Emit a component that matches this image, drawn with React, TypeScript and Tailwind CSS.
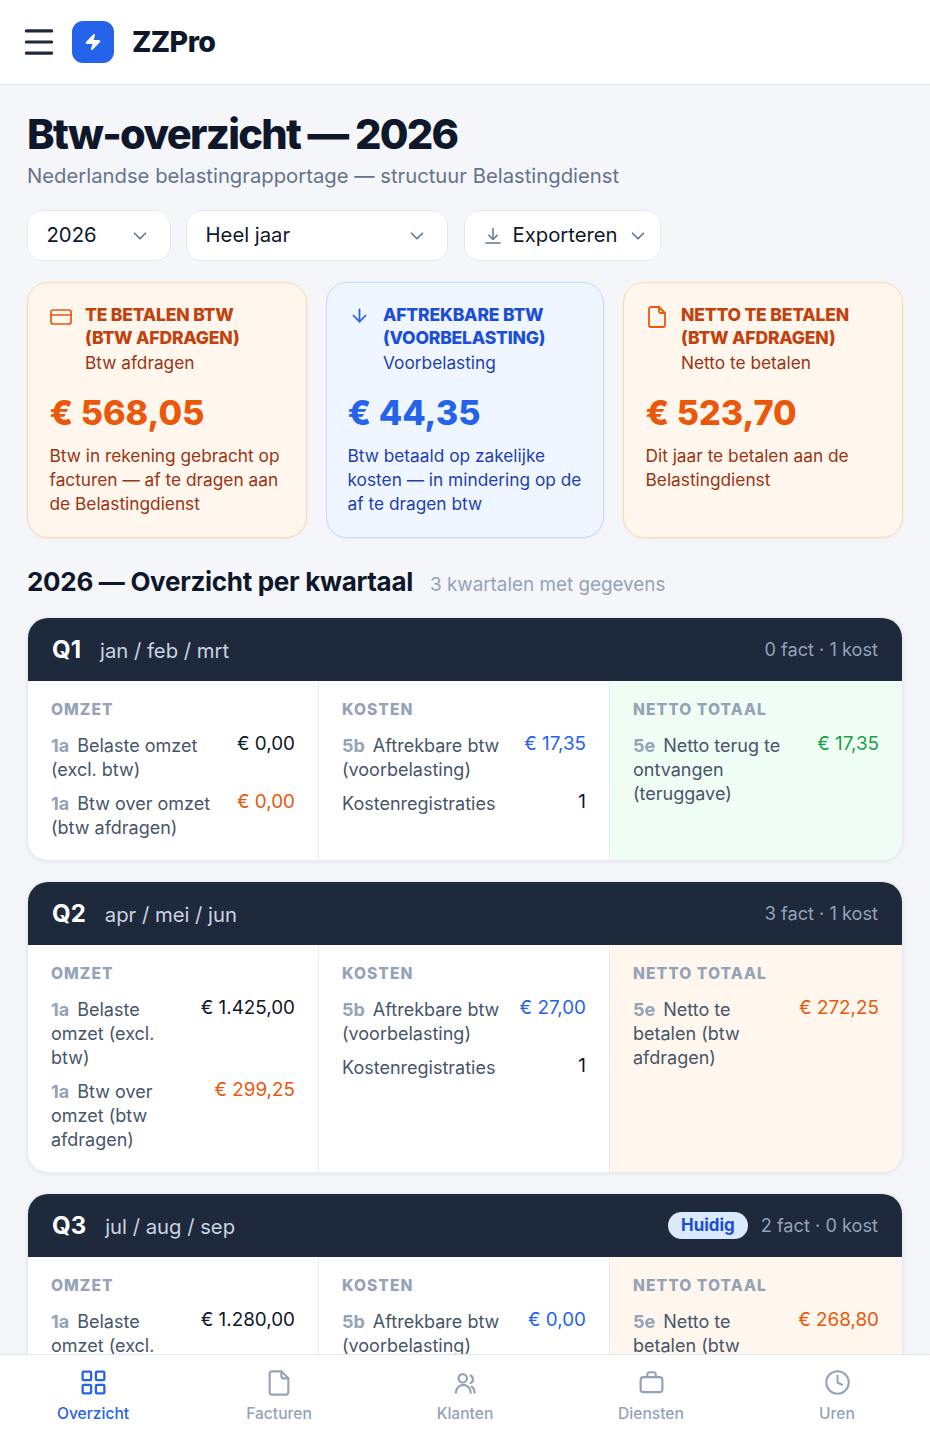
import { ArrowDown, ChevronDown, Clock, LayoutGrid, Menu, Zap } from 'lucide-react'
import type { ReactNode } from 'react'

const font = "font-['Inter',sans-serif]"

function CardIcon({ className }: { className?: string }) {
  return (
    <svg viewBox="0 0 24 24" fill="none" stroke="currentColor" strokeWidth="1.7" strokeLinecap="round" strokeLinejoin="round" className={className}>
      <rect x="2" y="5" width="20" height="14" rx="2" />
      <path d="M2 10h20" />
    </svg>
  )
}

function FileIcon({ className }: { className?: string }) {
  return (
    <svg viewBox="0 0 24 24" fill="none" stroke="currentColor" strokeWidth="1.8" strokeLinecap="round" strokeLinejoin="round" className={className}>
      <path d="M14 2H6a2 2 0 0 0-2 2v16a2 2 0 0 0 2 2h12a2 2 0 0 0 2-2V8z" />
      <path d="M14 2v4a2 2 0 0 0 2 2h4" />
    </svg>
  )
}

function BagIcon({ className }: { className?: string }) {
  return (
    <svg viewBox="0 0 24 24" fill="none" stroke="currentColor" strokeWidth="1.8" strokeLinecap="round" strokeLinejoin="round" className={className}>
      <rect x="3" y="7.5" width="18" height="12.5" rx="2.5" />
      <path d="M8.5 7.5v-2a2 2 0 0 1 2-2h3a2 2 0 0 1 2 2v2" />
    </svg>
  )
}

function PeopleIcon({ className }: { className?: string }) {
  return (
    <svg viewBox="0 0 24 24" fill="none" stroke="currentColor" strokeWidth="1.8" strokeLinecap="round" strokeLinejoin="round" className={className}>
      <circle cx="9.7" cy="8.5" r="3.5" />
      <path d="M4 20.5c0-3.5 2.8-6.5 6.2-6.5s6.2 3 6.2 6.5" />
      <path d="M16.2 6.2a3.5 3.5 0 0 1 0 6.3" />
      <path d="M19.5 20.5c0-2.2-.9-3.9-2.4-5" />
    </svg>
  )
}

function ExportIcon({ className }: { className?: string }) {
  return (
    <svg viewBox="0 0 24 24" fill="none" stroke="currentColor" strokeWidth="1.8" strokeLinecap="round" strokeLinejoin="round" className={className}>
      <path d="M12 3v13" />
      <path d="M7 11l5 5 5-5" />
      <path d="M3.5 20.5h17" />
    </svg>
  )
}

function SummaryCard(props: {
  tone: 'orange' | 'blue'
  icon: ReactNode
  title: ReactNode
  sub: string
  amount: string
  text: string
}) {
  const blue = props.tone === 'blue'
  return (
    <div className={`rounded-[21px] border-[1.5px] pt-[20px] h-[256px] shadow-[0_1px_3px_rgba(15,23,42,0.05)] ${blue ? 'pl-[20.5px] pr-[19px] bg-[#eff6ff] border-[#bfdbfe]' : 'px-[21.5px] bg-[#fff7ed] border-[#fed7aa]'}`}>
      <div className="flex gap-[12.5px]">
        <div className="w-[23px] shrink-0 pt-[2px] flex justify-center">{props.icon}</div>
        <div>
          <div className={`text-[17.55px] leading-[23px] font-extrabold tracking-[-0.2px] ${blue ? 'text-[#1d4ed8]' : 'text-[#c2410c]'}`}>{props.title}</div>
          <div className={`text-[17.29px] leading-[27px] ${blue ? 'text-[#1e40af]' : 'text-[#9a3412]'}`}>{props.sub}</div>
        </div>
      </div>
      <div className={`mt-[14.5px] text-[34.2px] leading-[44px] font-extrabold ${blue ? 'text-[#2563eb]' : 'text-[#ea580c]'}`}>{props.amount}</div>
      <div className={`mt-[9px] text-[17.29px] leading-[24px] ${blue ? 'text-[#1e40af]' : 'text-[#9a3412]'}`}>{props.text}</div>
    </div>
  )
}

function Row(props: { code?: string; label: string; value: string; color: string; gap?: string }) {
  return (
    <div className={`flex justify-between gap-[16px] ${props.gap ?? ''}`}>
      <div className="text-[18px] leading-[24px] text-[#475569]">
        {props.code && <span className="font-bold text-[#94a3b8] mr-[8px]">{props.code}</span>}
        {props.label}
      </div>
      <div className={`-mt-[2px] text-[18.85px] leading-[24.5px] whitespace-nowrap ${props.color}`}>{props.value}</div>
    </div>
  )
}

function Column(props: { title: string; children: ReactNode; className?: string }) {
  return (
    <div className={`px-[23px] pt-[19px] pb-[20.5px] ${props.className ?? ''}`}>
      <div className="text-[15.6px] leading-[19px] font-extrabold tracking-[1.05px] text-[#94a3b8] mb-[14.5px]">{props.title}</div>
      {props.children}
    </div>
  )
}

function Quarter(props: {
  q: string
  months: string
  meta: string
  current?: boolean
  omzet: string
  btw: string
  kosten: string
  aantal: string
  netLabel: string
  net: string
  netColor: string
  netBg: string
}) {
  return (
    <div className="rounded-[21px] bg-white shadow-[0_1px_4px_rgba(15,23,42,0.08)] overflow-hidden border border-[#e8ecf2]">
      <div className="h-[63px] bg-[#1e293b] flex items-center px-[24px]">
        <div className="pt-[1px] text-[24px] font-bold text-white">{props.q}</div>
        <div className="ml-[19px] pt-[2px] text-[20.28px] text-[#cbd5e1]">{props.months}</div>
        <div className="ml-auto flex items-center gap-[13px]">
          {props.current && (
            <span className="rounded-full bg-[#dbeafe] text-[#1d4ed8] text-[16.9px] leading-[27px] font-bold px-[13px]">Huidig</span>
          )}
          <span className="text-[18.2px] text-[#94a3b8]">{props.meta}</span>
        </div>
      </div>
      <div className="grid grid-cols-[290px_292px_292px]">
        <Column title="OMZET">
          <Row code="1a" label="Belaste omzet (excl. btw)" value={props.omzet} color="text-[#0f172a]" />
          <Row code="1a" label="Btw over omzet (btw afdragen)" value={props.btw} color="text-[#ea580c]" gap="mt-[10px]" />
        </Column>
        <Column title="KOSTEN" className="border-x border-[#e8ecf2]">
          <Row code="5b" label="Aftrekbare btw (voorbelasting)" value={props.kosten} color="text-[#2563eb]" />
          <Row label="Kostenregistraties" value={props.aantal} color="text-[#0f172a]" gap="mt-[10px]" />
        </Column>
        <Column title="NETTO TOTAAL" className={props.netBg}>
          <Row code="5e" label={props.netLabel} value={props.net} color={props.netColor} />
        </Column>
      </div>
    </div>
  )
}

function NavItem(props: { icon: ReactNode; label: string; active?: boolean }) {
  return (
    <div className={`flex flex-col items-center gap-[7px] ${props.active ? 'text-[#2563eb]' : 'text-[#94a3b8]'}`}>
      <div className="h-[29px] flex items-center">{props.icon}</div>
      <span className="text-[15.6px] leading-[19px] font-medium">{props.label}</span>
    </div>
  )
}

export default function App() {
  return (
    <div className={`h-screen overflow-hidden bg-[#f4f6fa] text-[#0f172a] ${font}`}>
      <header className="h-[85px] bg-white border-b border-[#e2e8f0] flex items-center pl-[20px]">
        <Menu className="h-[38px] w-[38px] text-[#1e293b]" strokeWidth={2} />
        <div className="ml-[14px] h-[42px] w-[42px] rounded-[11px] bg-[#2563eb] flex items-center justify-center">
          <Zap className="h-[18px] w-[18px] text-white fill-white" strokeWidth={1.5} />
        </div>
        <div className="ml-[18px] text-[28.6px] font-extrabold tracking-[-0.6px] text-[#0f172a]">ZZPro</div>
      </header>

      <main className="px-[27px] pt-[22px]">
        <h1 className="text-[41.6px] leading-[54px] font-extrabold tracking-[-1.7px]">Btw-overzicht — 2026</h1>
        <p className="text-[20.28px] leading-[30px] text-[#64748b]">Nederlandse belastingrapportage — structuur Belastingdienst</p>

        <div className="mt-[19px] flex gap-[15px]">
          <div className="w-[144px] h-[51px] rounded-[15px] bg-white border-[1.5px] border-[#e5e9f0] flex items-center justify-between pl-[18.5px] pr-[19.5px] text-[20.28px]">
            2026
            <ChevronDown className="h-[22px] w-[22px] text-[#64748b]" strokeWidth={1.8} />
          </div>
          <div className="w-[262px] h-[51px] rounded-[15px] bg-white border-[1.5px] border-[#e5e9f0] flex items-center justify-between pl-[18.5px] pr-[19.5px] text-[20.28px]">
            Heel jaar
            <ChevronDown className="h-[22px] w-[22px] text-[#64748b]" strokeWidth={1.8} />
          </div>
          <div className="ml-[1px] w-[197px] h-[51px] rounded-[15px] bg-white border-[1.5px] border-[#e5e9f0] flex items-center pl-[18px] text-[20.28px]">
            <ExportIcon className="h-[20px] w-[20px] text-[#64748b]" />
            <span className="ml-[9.5px]">Exporteren</span>
            <ChevronDown className="ml-[9px] h-[22px] w-[22px] text-[#64748b]" strokeWidth={1.8} />
          </div>
        </div>

        <div className="mt-[21px] grid grid-cols-[280px_278px_280px] gap-[19px]">
          <SummaryCard
            tone="orange"
            icon={<CardIcon className="h-[24px] w-[24px] shrink-0 text-[#ea580c]" />}
            title={<>TE BETALEN BTW<br />(BTW AFDRAGEN)</>}
            sub="Btw afdragen"
            amount="€ 568,05"
            text="Btw in rekening gebracht op facturen — af te dragen aan de Belastingdienst"
          />
          <SummaryCard
            tone="blue"
            icon={<ArrowDown className="h-[21px] w-[21px] shrink-0 text-[#2563eb]" />}
            title={<>AFTREKBARE BTW<br />(VOORBELASTING)</>}
            sub="Voorbelasting"
            amount="€ 44,35"
            text="Btw betaald op zakelijke kosten — in mindering op de af te dragen btw"
          />
          <SummaryCard
            tone="orange"
            icon={<FileIcon className="h-[24px] w-[24px] shrink-0 text-[#ea580c]" />}
            title={<>NETTO TE BETALEN<br />(BTW AFDRAGEN)</>}
            sub="Netto te betalen"
            amount="€ 523,70"
            text="Dit jaar te betalen aan de Belastingdienst"
          />
        </div>

        <div className="mt-[28px] flex items-baseline gap-[17px]">
          <h2 className="text-[26px] leading-[32px] font-bold tracking-[-0.3px]">2026 — Overzicht per kwartaal</h2>
          <span className="text-[18.85px] text-[#94a3b8]">3 kwartalen met gegevens</span>
        </div>

        <div className="mt-[18px] flex flex-col gap-[20px] w-[876px]">
          <Quarter q="Q1" months="jan / feb / mrt" meta="0 fact · 1 kost" omzet="€ 0,00" btw="€ 0,00" kosten="€ 17,35" aantal="1" netLabel="Netto terug te ontvangen (teruggave)" net="€ 17,35" netColor="text-[#16a34a]" netBg="bg-[#f0fdf4]" />
          <Quarter q="Q2" months="apr / mei / jun" meta="3 fact · 1 kost" omzet="€ 1.425,00" btw="€ 299,25" kosten="€ 27,00" aantal="1" netLabel="Netto te betalen (btw afdragen)" net="€ 272,25" netColor="text-[#ea580c]" netBg="bg-[#fff7ed]" />
          <Quarter q="Q3" months="jul / aug / sep" meta="2 fact · 0 kost" current omzet="€ 1.280,00" btw="€ 268,80" kosten="€ 0,00" aantal="0" netLabel="Netto te betalen (btw afdragen)" net="€ 268,80" netColor="text-[#ea580c]" netBg="bg-[#fff7ed]" />
        </div>
      </main>

      <nav className="fixed bottom-0 left-0 right-0 h-[86px] bg-white border-t border-[#e2e8f0] grid grid-cols-5 pt-[13px]">
        <NavItem active label="Overzicht" icon={<LayoutGrid className="h-[29px] w-[29px]" strokeWidth={1.9} />} />
        <NavItem label="Facturen" icon={<FileIcon className="h-[28px] w-[28px]" />} />
        <NavItem label="Klanten" icon={<PeopleIcon className="h-[29px] w-[29px]" />} />
        <NavItem label="Diensten" icon={<BagIcon className="h-[29px] w-[29px]" />} />
        <NavItem label="Uren" icon={<Clock className="h-[27px] w-[27px]" strokeWidth={1.8} />} />
      </nav>
    </div>
  )
}
